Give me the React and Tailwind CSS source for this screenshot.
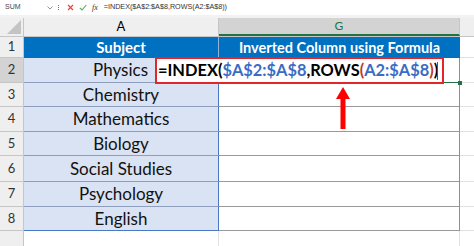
import React from "react";

const rows = [
  { n: 2, h: "h-[25px]", text: "Physics" },
  { n: 3, h: "h-[24px]", text: "Chemistry" },
  { n: 4, h: "h-[25px]", text: "Mathematics" },
  { n: 5, h: "h-[24px]", text: "Biology" },
  { n: 6, h: "h-[26px]", text: "Social Studies" },
  { n: 7, h: "h-[25px]", text: "Psychology" },
  { n: 8, h: "h-[24px]", text: "English" },
];

export default function App() {
  return (
    <div className="relative w-[474px] h-[246px] overflow-hidden bg-white font-['Lato',sans-serif] text-black">
      {/* formula bar */}
      <div className="flex h-[15px] items-center bg-white text-[7px] text-[#444]">
        <div className="w-[5px]" />
        <div className="w-[40px] font-['Liberation_Sans',sans-serif]">SUM</div>
        <svg width="6" height="4" viewBox="0 0 6 4" className="ml-[2px]"><path d="M0.5 0.5 L3 3 L5.5 0.5" stroke="#777" strokeWidth="0.8" fill="none" /></svg>
        <div className="ml-[5px] flex flex-col gap-[1px]">
          <span className="block w-[1px] h-[1px] bg-[#777]" />
          <span className="block w-[1px] h-[1px] bg-[#777]" />
          <span className="block w-[1px] h-[1px] bg-[#777]" />
        </div>
        <svg width="7" height="7" viewBox="0 0 7 7" className="ml-[8px]"><path d="M1 1 L6 6 M6 1 L1 6" stroke="#e0403f" strokeWidth="1.1" fill="none" /></svg>
        <svg width="8" height="7" viewBox="0 0 8 7" className="ml-[5px]"><path d="M0.8 3.8 L3 6 L7.3 1" stroke="#4caf50" strokeWidth="1.1" fill="none" /></svg>
        <span className="ml-[5px] font-['Liberation_Serif',serif] italic text-[8px] text-[#333]">fx</span>
        <span className="ml-[6px] font-['Liberation_Sans',sans-serif] text-[7.2px] text-[#333]">=INDEX($A$2:$A$8,ROWS(A2:$A$8))</span>
      </div>
      <div className="h-[3px] bg-[#f2f2f2]" />
      {/* header row */}
      <div className="flex h-[19px] bg-[#efefef] border-b border-[#c6c6c6]">
        <div className="relative w-[24px] border-r border-[#c6c6c6]">
          <svg width="14" height="14" viewBox="0 0 14 14" className="absolute right-[2px] bottom-[2px]"><path d="M14 0 L14 14 L0 14 Z" fill="#c4c4c4" /></svg>
        </div>
        <div className="flex w-[195px] items-center justify-center border-r border-[#c6c6c6] text-[13px]">A</div>
        <div className="flex w-[241px] items-center justify-center border-r border-[#c6c6c6] bg-[#d3d3d3] text-[12px] text-[#217346] border-b-2 border-b-[#217346]">G</div>
        <div className="flex-1" />
      </div>
      {/* row 1 */}
      <div className="flex h-[21px]">
        <div className="flex w-[24px] items-center justify-center bg-[#efefef] border-r border-b border-[#c6c6c6] text-[13px] text-[#333]">1</div>
        <div className="flex w-[195px] items-center justify-center bg-[#0070c0] border-r border-[#8fb4e0] text-[15px] font-bold text-white">Subject</div>
        <div className="flex w-[241px] items-center justify-center bg-[#0070c0] text-[14.5px] font-bold text-white">Inverted Column using Formula</div>
        <div className="flex-1 border-b border-[#e1e1e1]" />
      </div>
      {rows.map((r, i) => (
        <div key={r.n} className={`flex ${r.h}`}>
          <div className={`flex w-[24px] items-center justify-center border-r border-b border-[#c6c6c6] text-[13px] text-[#333] ${r.n === 2 ? "bg-[#d3d3d3]" : "bg-[#efefef]"}`}>{r.n}</div>
          <div className={`flex w-[195px] items-center ${r.n === 2 ? "justify-end pr-[70px]" : "justify-center"} bg-[#dae3f3] border-r border-r-[#4a78c2] border-b ${i === rows.length - 1 ? "border-b-[#4a78c2]" : "border-b-[#8d9fbd]"} text-[17px] text-[#111]`}>
            {r.text}
          </div>
          <div className={`w-[241px] border-r border-r-[#8f8f8f] border-b ${r.n === 2 ? "border-b-[#217346]" : "border-b-[#9a9a9a]"}`} />
          <div className="flex-1 border-b border-[#e1e1e1]" />
        </div>
      ))}
      <div className="flex h-[15px]">
        <div className="w-[24px] bg-[#efefef] border-r border-[#c6c6c6]" />
        <div className="w-[195px] border-r border-[#e1e1e1]" />
        <div className="w-[241px] border-r border-[#e1e1e1]" />
        <div className="flex-1" />
      </div>

      {/* editing cell overlay with red box */}
      <div className="absolute left-[155px] top-[57px] w-[289px] h-[27px] bg-white border-2 border-[#e3262a] flex items-center pl-[1px]">
        <span className="text-[16.4px] font-bold whitespace-nowrap">
          <span className="text-black">=INDEX(</span>
          <span className="text-[#3a6cc4]">$A$2:$A$8</span>
          <span className="text-black">,ROWS</span>
          <span className="text-[#c0392b]">(</span>
          <span className="text-[#3a6cc4]">A2:$A$8</span>
          <span className="text-[#c0392b]">)</span>
          <span className="text-black">)</span>
        </span>
        <span className="absolute right-[4px] top-[3px] w-[1px] h-[18px] bg-[#555]" />
      </div>
      <span className="absolute left-[458px] top-[81px] w-[4px] h-[4px] bg-[#217346]" />

      {/* red arrow */}
      <svg className="absolute left-[335px] top-[87px]" width="16" height="42" viewBox="0 0 16 42">
        <path d="M8 0 L15 12 L10.5 12 L10.5 42 L5.5 42 L5.5 12 L1 12 Z" fill="#f00" />
      </svg>
    </div>
  );
}
